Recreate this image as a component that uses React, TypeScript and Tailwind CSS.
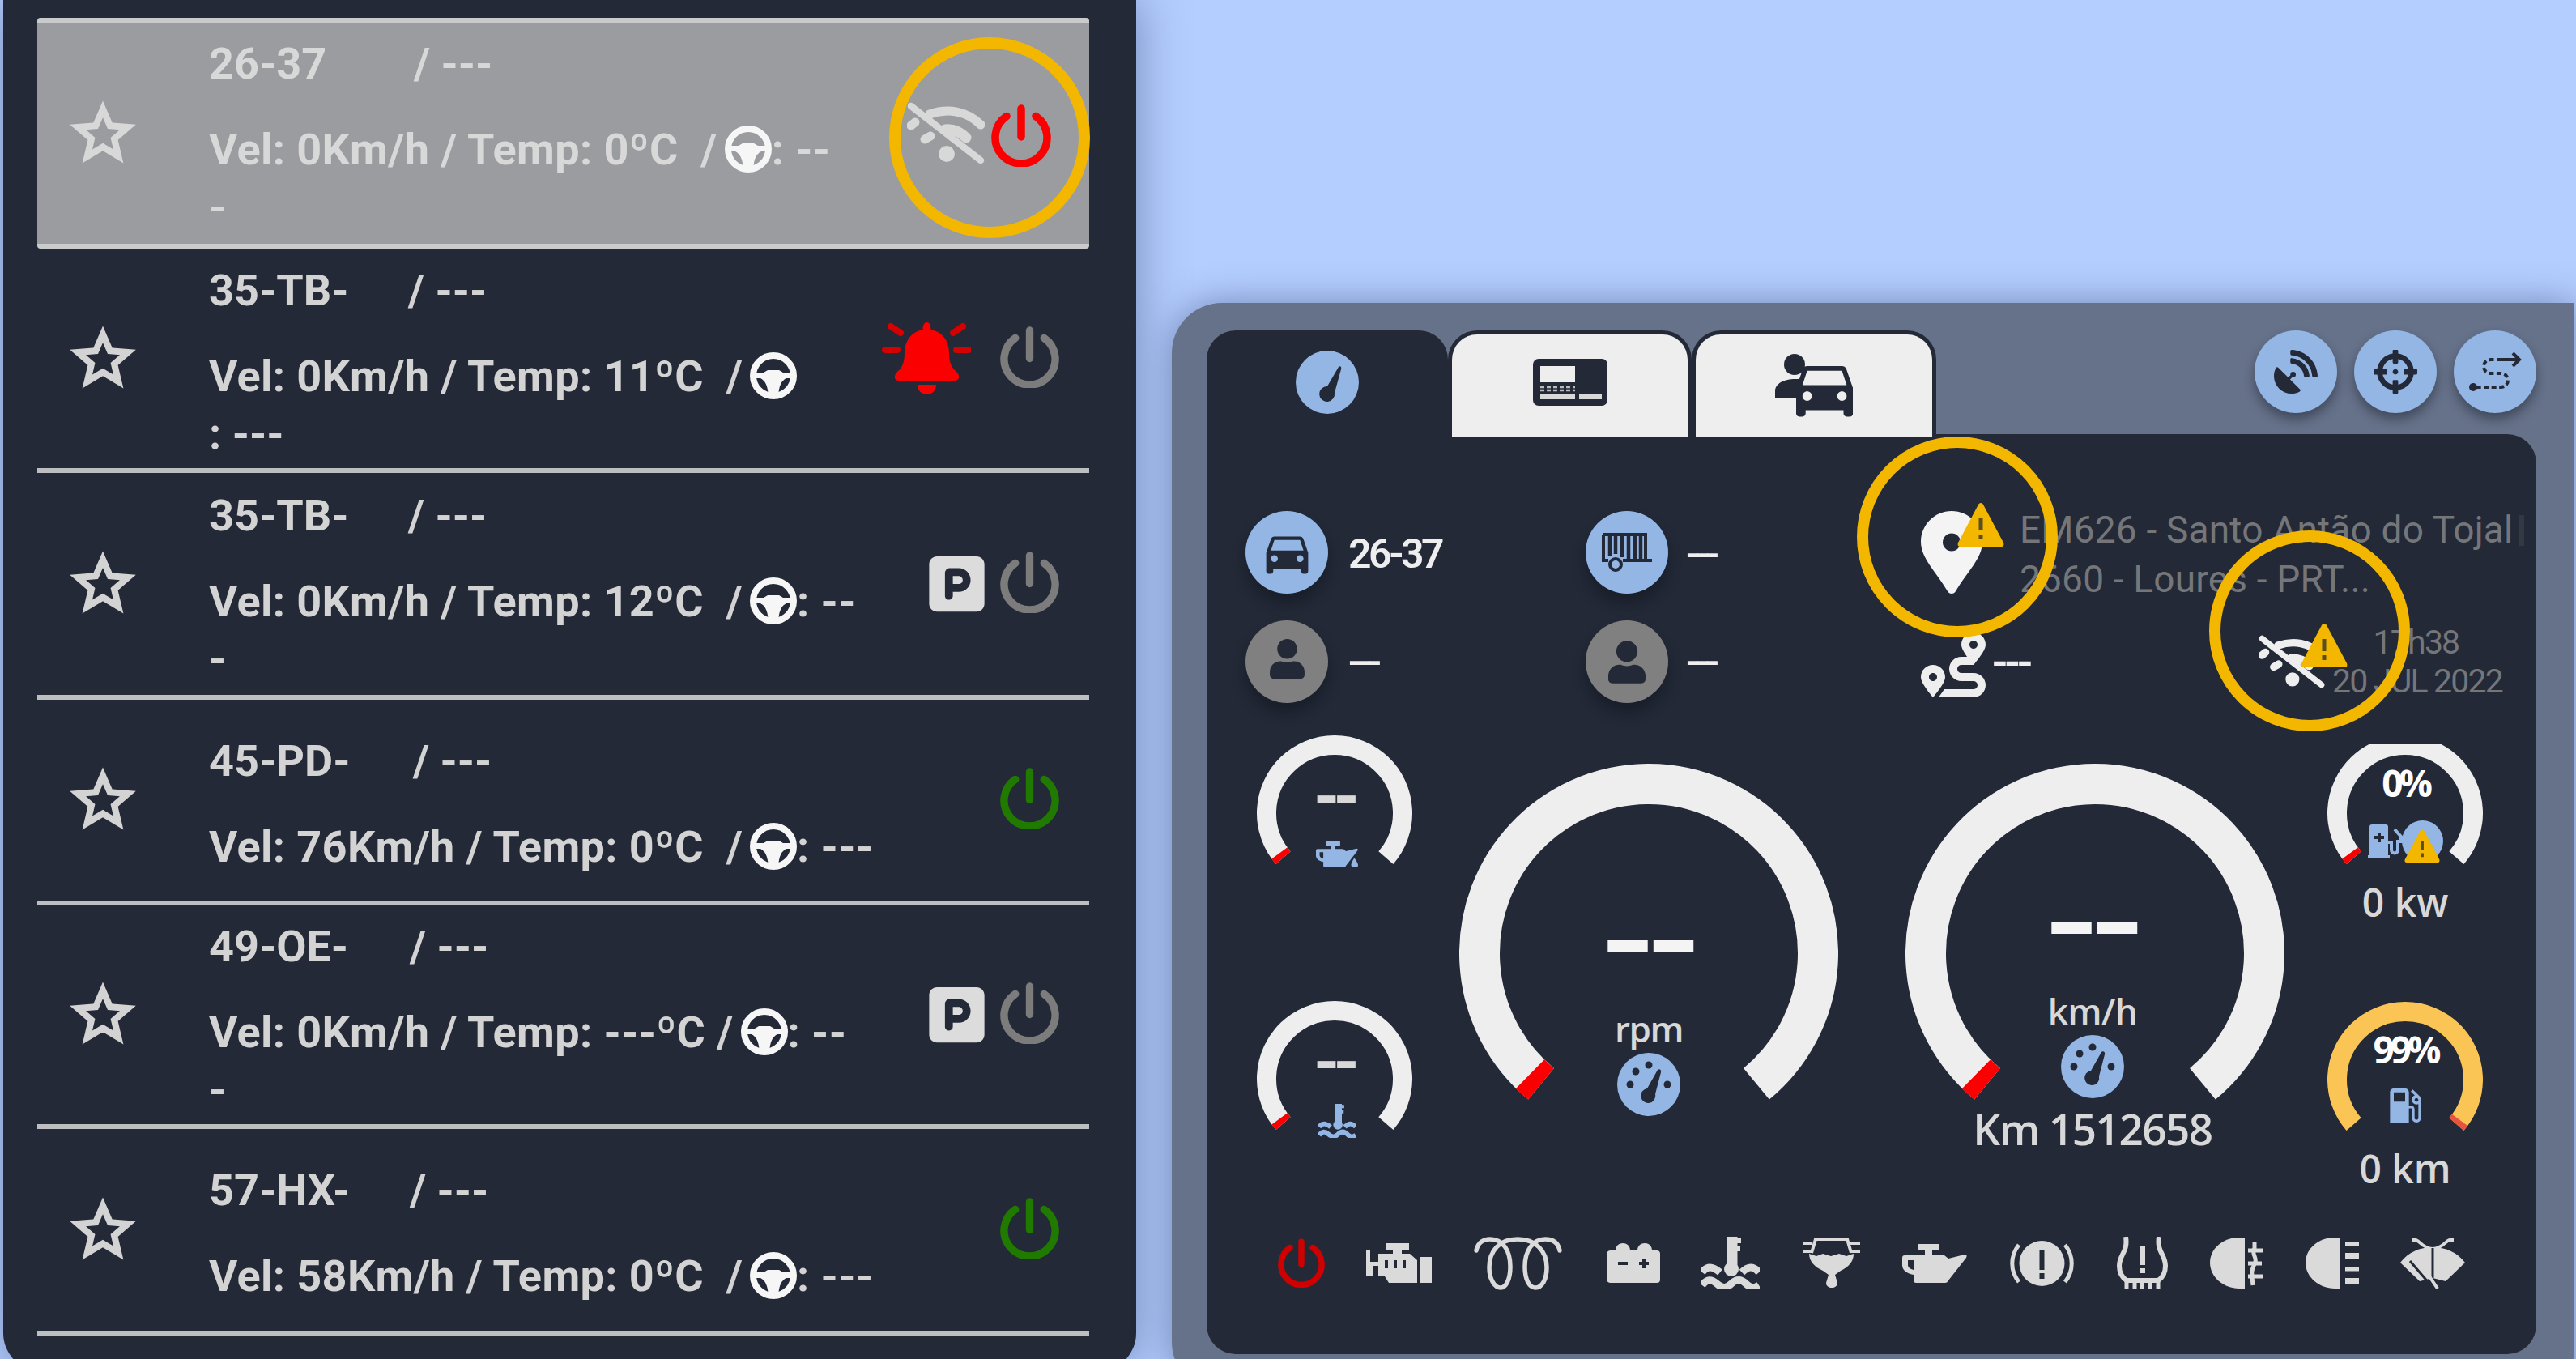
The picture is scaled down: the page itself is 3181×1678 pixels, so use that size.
import type { ReactNode } from "react";
import { FaCrosshairs, FaRoute, FaSatelliteDish, FaUser } from "react-icons/fa";
import { FaSquareParking } from "react-icons/fa6";
import { MdDirectionsCar, MdLocalGasStation } from "react-icons/md";

type Status = "offline" | "alarm" | "parked" | "on";

type Vehicle = {
  plate: string;
  plateWidth: string;
  info: string;
  driver: string;
  rest?: string;
  status: Status;
  height: string;
};

const vehicles: Vehicle[] = [
  { plate: "26-37", plateWidth: "w-[253px]", info: "Vel: 0Km/h / Temp: 0ºC  /", driver: ": --", rest: "-", status: "offline", height: "h-[285px]" },
  { plate: "35-TB-", plateWidth: "w-[246px]", info: "Vel: 0Km/h / Temp: 11ºC  /", driver: "", rest: ": ---", status: "alarm", height: "h-[277px]" },
  { plate: "35-TB-", plateWidth: "w-[246px]", info: "Vel: 0Km/h / Temp: 12ºC  /", driver: ": --", rest: "-", status: "parked", height: "h-[280px]" },
  { plate: "45-PD-", plateWidth: "w-[252px]", info: "Vel: 76Km/h / Temp: 0ºC  /", driver: ": ---", status: "on", height: "h-[254px]" },
  { plate: "49-OE-", plateWidth: "w-[248px]", info: "Vel: 0Km/h / Temp: ---ºC /", driver: ": --", rest: "-", status: "parked", height: "h-[276px]" },
  { plate: "57-HX-", plateWidth: "w-[248px]", info: "Vel: 58Km/h / Temp: 0ºC  /", driver: ": ---", status: "on", height: "h-[255px]" },
];

function StarIcon() {
  return (
    <svg viewBox="0 0 24 24" className="ml-8 size-[98px] shrink-0" fill="none" stroke="currentColor" strokeWidth="2">
      <path d="M12 4.600l2.150 5 5.400.45-4.100 3.550 1.250 5.250L12 16.050l-4.700 2.800 1.250-5.250-4.100-3.550 5.400-.45z" />
    </svg>
  );
}

function PowerIcon({ className }: { className: string }) {
  return (
    <svg viewBox="0 0 74 77" className={className} fill="none" stroke="currentColor" strokeWidth="9.5" strokeLinecap="round">
      <path d="M19 14.5A32 32 0 1 0 55 14.5M37 5v35" />
    </svg>
  );
}

function SteeringWheel() {
  return (
    <svg viewBox="0 0 58 58" className="ml-[9px] inline-block size-[58px] align-[-10px] text-[#f6f6f6]">
      <circle cx="29" cy="29" r="25" fill="none" stroke="currentColor" strokeWidth="8" />
      <path d="M5 25h12l5-3h14l5 3h12v7h-8c-6 3-9 9-10 22h-12c-1-13-4-19-10-22H5z" fill="currentColor" />
    </svg>
  );
}

function WifiOff({ className }: { className: string }) {
  return (
    <svg viewBox="0 0 96 78" className={className} fill="none" stroke="currentColor" strokeLinecap="round">
      <path d="M5 5l86 67" strokeWidth="8.5" />
      <path d="M28 15c22-8 46-4 63 13" strokeWidth="11" />
      <path d="M47 34c10-1 19 3 26 10" strokeWidth="13" />
      <path d="M5 29l5-4M22 46l7-4" strokeWidth="11" />
      <circle cx="49" cy="64" r="10" fill="currentColor" stroke="none" />
    </svg>
  );
}

function AlarmBell() {
  return (
    <svg viewBox="0 0 110 89" className="h-[89px] w-[110px] text-[#fa0000]">
      <path
        d="M55.500 0c3 0 5 3 5 9C75 12 82 22 83 36c0 14 3 20 9 25 5 5 4 11-2 11H21c-6 0-7-6-2-11 6-5 9-11 9-25C29 22 36 12 50.500 9c0-6 2-9 5-9z"
        fill="currentColor"
      />
      <path d="M44 77h23c0 16-23 16-23 0z" fill="currentColor" />
      <path d="M11 5l12 8M100 5l-12 8M4 34h15M107 34H92" stroke="#d50000" strokeWidth="8" strokeLinecap="round" />
    </svg>
  );
}

function StatusIcons({ status }: { status: Status }) {
  if (status === "offline") {
    return (
      <div className="flex items-center gap-2 pr-[47px]">
        <WifiOff className="h-[78px] w-[96px] text-[#d8d8d8]" />
        <PowerIcon className="mt-1.5 h-[77px] w-[74px] text-[#fa0000]" />
      </div>
    );
  }
  if (status === "alarm") {
    return (
      <div className="flex items-center gap-9 pr-[37px]">
        <AlarmBell />
        <PowerIcon className="-mt-1 h-[76px] w-[73px] text-[#7c7c7c]" />
      </div>
    );
  }
  if (status === "parked") {
    return (
      <div className="flex items-center gap-[19px] pr-[37px]">
        <FaSquareParking className="h-[78px] w-[69px] text-[#dcdcdc]" />
        <PowerIcon className="-mt-1 h-[76px] w-[73px] text-[#7c7c7c]" />
      </div>
    );
  }
  return (
    <div className="flex items-center pr-[37px]">
      <PowerIcon className="-mt-1 h-[76px] w-[73px] text-[#217a00]" />
    </div>
  );
}

function VehicleRow({ vehicle }: { vehicle: Vehicle }) {
  const selected = vehicle.status === "offline";
  return (
    <li
      className={`flex items-center border-b-[6px] ${vehicle.height} ${
        selected ? "rounded-[4px] border-t-[6px] border-[#c9cacc] bg-[#9b9ca0] text-[#d8d8d8]" : "border-[#bcbec1] text-[#d3d3d3]"
      }`}
    >
      <StarIcon />
      <div className={`ml-[82px] flex-1 text-[54px] leading-[71px] font-bold whitespace-pre ${selected ? "pt-1" : "pt-2"}`}>
        <p className="mb-[35px] flex">
          <span className={vehicle.plateWidth}>{vehicle.plate}</span>
          <span>/ ---</span>
        </p>
        <p className="h-[71px] tracking-[0.4px]">
          {vehicle.info}
          <SteeringWheel />
          {vehicle.driver}
        </p>
        {vehicle.rest && <p>{vehicle.rest}</p>}
      </div>
      <StatusIcons status={vehicle.status} />
    </li>
  );
}

function GaugeIcon({ dots = true }: { dots?: boolean }) {
  return (
    <svg viewBox="0 0 78 78" className="size-[78px] shrink-0">
      <circle cx="39" cy="39" r="39" fill="#93b6e5" />
      <g fill="#232937">
        {dots ? (
          <>
            <circle cx="16" cy="39" r="4.500" />
            <circle cx="23" cy="23" r="4.500" />
            <circle cx="39" cy="15" r="4.500" />
            <circle cx="62" cy="39" r="4.500" />
            <path d="M50 21c2-2 5 0 4 3l-7 27a9 9 0 1 1-10-7z" />
          </>
        ) : (
          <path d="M53 20c2-2 4 0 3 3l-8 29a9.500 9.500 0 1 1-9-8z" />
        )}
      </g>
    </svg>
  );
}

function CardIcon() {
  return (
    <svg viewBox="0 0 92 58" className="h-[58px] w-[92px]">
      <rect width="92" height="58" rx="7" fill="#232937" />
      <rect x="9" y="9" width="43" height="20" fill="#eee" />
      <path d="M9 35h43M9 39h43" stroke="#bbb" strokeWidth="2.500" strokeDasharray="5 3" />
      <path d="M9 47h43M57 47h28" stroke="#d8d8d8" strokeWidth="6" />
    </svg>
  );
}

function DriverCarIcon() {
  return (
    <svg viewBox="0 0 96 78" className="h-[78px] w-[96px] text-[#232937]" fill="currentColor">
      <circle cx="24" cy="13" r="13" />
      <path d="M0 55V46C0 35 14 30 28 31h7l-8 24z" />
      <path
        transform="translate(14.300 -4.500) scale(3.900)"
        d="M18.920 6.010C18.720 5.420 18.160 5 17.500 5h-11c-.66 0-1.210.42-1.420 1.010L3 12v8c0 .55.45 1 1 1h1c.55 0 1-.45 1-1v-1h12v1c0 .55.45 1 1 1h1c.55 0 1-.45 1-1v-8l-2.080-5.990zM6.500 16c-.83 0-1.500-.67-1.500-1.500S5.670 13 6.500 13s1.500.67 1.500 1.500S7.330 16 6.500 16zm11 0c-.83 0-1.500-.67-1.500-1.500s.67-1.500 1.500-1.500 1.500.67 1.500 1.500-.67 1.500-1.500 1.500zM5 11l1.500-4.500h11L19 11H5z"
      />
    </svg>
  );
}

function TripIcon() {
  return (
    <svg viewBox="0 0 65 52" className="h-[52px] w-[65px]" fill="none" stroke="currentColor" strokeWidth="4">
      <path d="M40 11H27c-12 0-12 17 0 17h12c12 0 12 17 0 17H6" strokeDasharray="6 3.500" />
      <path d="M38 11h22M54 3l8 8-8 8" />
      <circle cx="5" cy="45" r="5" fill="currentColor" stroke="none" />
    </svg>
  );
}

function TrailerIcon() {
  return (
    <svg viewBox="0 0 65 50" className="h-[50px] w-[65px]" fill="none" stroke="currentColor" strokeWidth="4">
      <path d="M2 3h53v32h8M55 35H27M9 35H3V3" />
      <path d="M11 3v26M18 3v24M26 3v28M34 3v32M42 3v32M49 3v32" strokeWidth="4.500" />
      <circle cx="18" cy="40" r="7" />
    </svg>
  );
}

function PinIcon() {
  return (
    <svg viewBox="0 0 76 102" className="h-[102px] w-[76px]" fill="#f4f4f4" fillRule="evenodd">
      <path d="M38 0C59 0 76 17 76 38c0 20-18 36-33 61-2 4-8 4-10 0C18 74 0 58 0 38 0 17 17 0 38 0zm0 27.500a11 11 0 1 0 0 22 11 11 0 0 0 0-22z" />
    </svg>
  );
}

function Warning({ className }: { className: string }) {
  return (
    <svg viewBox="0 0 58 54" className={className}>
      <path d="M29 0c1.500 0 2.500 1 3 2l25 47c1 3 0 5-3 5H4c-3 0-4-2-3-5L26 2c.5-1 1.500-2 3-2z" fill="#f3b700" />
      <path d="M29 19v15M29 39v6" stroke="#5a4d20" strokeWidth="5" />
    </svg>
  );
}

function ChargerIcon() {
  return (
    <svg viewBox="0 0 46 42" className="h-[42px] w-[46px]" fill="currentColor">
      <path d="M5 0h17c2 0 3 1 3 3v35h2v4H0v-4h2V3c0-2 1-3 3-3z" />
      <path d="M14 10v12M8 16h12" stroke="#232937" strokeWidth="4" />
      <path d="M25 22h4v9c0 6 8 6 8 0V19M33 6l8 9v8" fill="none" stroke="currentColor" strokeWidth="4" />
    </svg>
  );
}

function OilIcon({ className, drip = false }: { className: string; drip?: boolean }) {
  return (
    <svg viewBox="0 0 80 48" className={className} preserveAspectRatio="none" fill="currentColor">
      <path
        d="M19 0h27v8h-9v6h15l5 4 20-5c3 0 3 2 2 4L57 45c-1 2-2 3-4 3H17c-2 0-3-2-3-3v-7C5 36 0 32 0 26V17c0-2 1-3 3-3h25V8h-9zM7 20v6c0 3 3 5 7 6V20z"
        fillRule="evenodd"
      />
      {drip && <path d="M73 30c4 7 7 10 7 14 0 6-13 6-13 0 0-4 2-7 6-14z" />}
    </svg>
  );
}

function CoolantIcon({ className }: { className: string }) {
  return (
    <svg viewBox="0 0 72 65" className={className} fill="none" stroke="currentColor" strokeWidth="9">
      <path d="M38 0v40" strokeWidth="13" />
      <path d="M42 5h7M42 15h6" strokeWidth="6" />
      <circle cx="37" cy="40" r="9" fill="currentColor" stroke="none" />
      <path d="M1 44c6-8 12-8 22 0M50 44c8-8 14-8 21 0" />
      <path d="M1 60c6-8 11-8 18-2s12 6 18 0 12-6 18 0 10 6 16 2" />
    </svg>
  );
}

const statusIcons: { name: string; icon: ReactNode }[] = [
  { name: "ignition", icon: <PowerIcon className="h-[61px] w-[58px] text-[#cf0000]" /> },
  {
    name: "engine",
    icon: (
      <svg viewBox="0 0 81 50" className="h-[50px] w-[81px]" fill="currentColor">
        <path d="M24 0h29v8h-9v5h10l9 8v28H28l-5-8h-8V28h-7v13H0V8h5v15h10V13h18V8h-9zM67 17h14v32H67z" />
        <path d="M25 21v10M36 21v10M47 21v10" stroke="#232937" strokeWidth="4" />
      </svg>
    ),
  },
  {
    name: "preheat",
    icon: (
      <svg viewBox="0 0 109 66" className="h-[66px] w-[109px]" fill="none" stroke="currentColor" strokeWidth="5.500" strokeLinecap="round">
        <path d="M3 17C5 7 12 3 20 3c16 0 25 14 25 34 0 15-5 26-12 26S19 53 19 38C19 17 32 3 54 3s36 14 36 35c0 15-6 25-14 25S63 52 63 37C63 17 73 3 88 3c9 0 16 4 18 14" />
      </svg>
    ),
  },
  {
    name: "battery",
    icon: (
      <svg viewBox="0 0 66 50" className="ml-1 h-[50px] w-[66px]" fill="currentColor">
        <path d="M5 9h6c0-12 18-12 18 0h9c0-12 18-12 18 0h6c3 0 4 2 4 4v32c0 3-2 4-4 4H5c-3 0-5-2-5-4V13c0-2 2-4 5-4z" />
        <path d="M14 25h12M40 25h12M46 19v12" stroke="#232937" strokeWidth="4" />
      </svg>
    ),
  },
  { name: "coolant", icon: <CoolantIcon className="h-[65px] w-[72px]" /> },
  {
    name: "fuel-filter",
    icon: (
      <svg viewBox="0 0 73 65" className="h-[65px] w-[73px]" fill="none" stroke="currentColor" strokeWidth="4">
        <path d="M12 20L17 3h39l5 17M1 8h12M1 18h12M60 8h12M60 18h12" />
        <path d="M9 21l9 3 8-3 10 3 10-3 9 3 9-3c0 10-7 17-16 21l-7 5 3 10c0 8-14 8-14 0l3-10-7-5C17 38 9 31 9 21z" fill="currentColor" stroke="none" />
      </svg>
    ),
  },
  { name: "oil", icon: <OilIcon className="h-[48px] w-[80px]" /> },
  {
    name: "brake",
    icon: (
      <svg viewBox="0 0 81 58" className="h-[58px] w-[81px]" fill="none" stroke="currentColor" strokeWidth="5">
        <circle cx="40.500" cy="29" r="28" fill="currentColor" stroke="none" />
        <path d="M12 6C1 20 1 38 12 52M69 6c11 14 11 32 0 46" />
        <path d="M40.500 12v25M40.500 41v7" stroke="#232937" strokeWidth="6" />
      </svg>
    ),
  },
  {
    name: "tyre",
    icon: (
      <svg viewBox="0 0 65 65" className="h-[65px] w-[65px]" fill="none" stroke="currentColor" strokeWidth="6">
        <path d="M12 0c3 19-8 22-8 36 0 8 3 14 9 18h39c6-4 9-10 9-18 0-14-11-17-8-36" />
        <path d="M13 54v10M23 54v10M32 54v10M42 54v10M52 54v10" strokeWidth="5" />
        <path d="M32.500 11v24M32.500 39v6" strokeWidth="7" />
      </svg>
    ),
  },
  {
    name: "fog",
    icon: (
      <svg viewBox="0 0 66 65" className="h-[65px] w-[66px]" fill="none" stroke="currentColor" strokeWidth="5">
        <path d="M43 1v63h-7C17 64 0 50 0 32S17 1 36 1z" fill="currentColor" stroke="none" />
        <path d="M47 17h18M47 33h17M47 49h18" />
        <path d="M55 6v8c-5 8 5 12 0 20s-3 14-2 26" />
      </svg>
    ),
  },
  {
    name: "low-beam",
    icon: (
      <svg viewBox="0 0 66 65" className="h-[65px] w-[66px]" fill="none" stroke="currentColor">
        <path d="M43 1v63h-7C17 64 0 50 0 32S17 1 36 1z" fill="currentColor" stroke="none" />
        <path d="M49 9h17M49 40h17" strokeWidth="5" />
        <path d="M49 24h17M49 55h17" strokeWidth="8" />
      </svg>
    ),
  },
  {
    name: "wipers",
    icon: (
      <svg viewBox="0 0 80 67" className="h-[67px] w-[80px]" fill="none" stroke="currentColor" strokeWidth="4">
        <path d="M0 33C10 20 24 14 40 14s30 6 40 19L56 56l-16-4-16 4z" fill="currentColor" stroke="none" />
        <path d="M14 5h5c4 0 8 10 21 11C53 15 57 5 61 5h5" />
        <path d="M12 31l24 28M40 15v37" stroke="#232937" strokeWidth="3" />
        <path d="M36 50l10 15" />
      </svg>
    ),
  },
];

function arc(center: number, radius: number, from: number, to: number) {
  const point = (deg: number) => {
    const rad = (deg * Math.PI) / 180;
    return `${(center + radius * Math.cos(rad)).toFixed(2)} ${(center + radius * Math.sin(rad)).toFixed(2)}`;
  };
  return `M${point(from)}A${radius} ${radius} 0 ${to - from > 180 ? 1 : 0} 1 ${point(to)}`;
}

type DialProps = {
  size: number;
  thickness: number;
  // degrees below the horizontal where the scale stops
  end: number;
  color?: string;
  markAtEnd?: boolean;
  markColor?: string;
};

function Dial({ size, thickness, end, color = "#eee", markAtEnd = false, markColor = "#fa0000" }: DialProps) {
  const center = size / 2;
  const radius = center - thickness / 2;
  const from = 180 - end;
  const to = 360 + end;
  return (
    <svg width={size} height={size} viewBox={`0 0 ${size} ${size}`} fill="none" strokeWidth={thickness}>
      <path d={arc(center, radius, from, to)} stroke={color} />
      <path d={markAtEnd ? arc(center, radius, to - 4.5, to) : arc(center, radius, from, from + 5)} stroke={markColor} />
    </svg>
  );
}

function SmallGauge({ children, dial }: { children: ReactNode; dial?: Partial<DialProps> }) {
  return (
    <div className="relative size-[192px]">
      <Dial size={192} thickness={24} end={41} {...dial} />
      <div className="absolute inset-0 flex flex-col items-center">{children}</div>
    </div>
  );
}

function RoundButton({ children }: { children: ReactNode }) {
  return (
    <button className="flex size-[102px] items-center justify-center rounded-full bg-[#93b6e5] text-[#232937] shadow-[0_8px_14px_rgba(20,25,35,0.45)]">
      {children}
    </button>
  );
}

function Badge({ children, muted = false }: { children: ReactNode; muted?: boolean }) {
  return (
    <div
      className={`flex size-[102px] shrink-0 items-center justify-center rounded-full text-[#232937] shadow-[0_12px_16px_rgba(10,14,22,0.4)] ${
        muted ? "bg-[#808080]" : "bg-[#93b6e5]"
      }`}
    >
      {children}
    </div>
  );
}

function Tabs() {
  return (
    <nav className="-mb-1 flex h-[132px]">
      <div className="flex w-[298px] justify-center rounded-t-[36px] bg-[#232937] pt-[25px]">
        <GaugeIcon dots={false} />
      </div>
      <div className="flex w-[301px] justify-center rounded-t-[36px] border-x-[5px] border-t-[5px] border-[#232937] bg-[#eee] pt-[30px]">
        <CardIcon />
      </div>
      <div className="flex w-[302px] justify-center rounded-t-[36px] border-x-[5px] border-t-[5px] border-[#232937] bg-[#eee] pt-6">
        <DriverCarIcon />
      </div>
    </nav>
  );
}

function InfoGrid() {
  return (
    <div className="grid grid-cols-[420px_414px_1fr] grid-rows-[102px_102px] gap-y-[33px] pt-[95px] pl-[48px] text-[50px] font-medium tracking-[-2px] text-[#eee]">
      <div className="flex items-center gap-[25px]">
        <Badge>
          <MdDirectionsCar className="size-[69px]" />
        </Badge>
        <span className="pt-1 font-semibold tracking-[-3.5px]">26-37</span>
      </div>
      <div className="flex items-center gap-[22px]">
        <Badge>
          <TrailerIcon />
        </Badge>
        <span className="pt-1 tracking-[-5px]">---</span>
      </div>
      <div className="flex items-center gap-[46px]">
        <div className="relative">
          <PinIcon />
          <Warning className="absolute -top-2.5 left-[45px] h-[54px] w-[58px]" />
        </div>
        <div className="pt-1.5 text-[46px] leading-[61px] font-normal tracking-[0.2px] whitespace-nowrap text-[#747679]">
          <p className="flex items-center gap-2">
            EM626 - Santo Antão do Tojal
            <span className="h-[38px] w-1.5 bg-[#343842]" />
          </p>
          <p>2660 - Loures - PRT...</p>
        </div>
      </div>

      <div className="flex items-center gap-[25px]">
        <Badge muted>
          <FaUser className="mb-2 h-[49px] w-[43px]" />
        </Badge>
        <span className="tracking-[-5px]">---</span>
      </div>
      <div className="flex items-center gap-[22px]">
        <Badge muted>
          <FaUser className="h-[53px] w-[46px]" />
        </Badge>
        <span className="tracking-[-5px]">---</span>
      </div>
      <div className="flex items-center">
        <FaRoute className="mt-2 size-[80px] shrink-0" />
        <span className="ml-2 w-[54px] text-[56px] tracking-[-3.5px]">---</span>
        <div className="relative ml-[275px]">
          <WifiOff className="h-[67px] w-[82px]" />
          <Warning className="absolute -top-3.5 left-[52px] h-[54px] w-[58px]" />
        </div>
        <p className="ml-[9px] w-[207px] text-center text-[41px] leading-[48px] font-normal tracking-[-1.8px] whitespace-nowrap text-[#747679]">
          17h38
          <br />
          20 JUL 2022
        </p>
      </div>
    </div>
  );
}

function Gauges() {
  return (
    <div className="flex h-[658px] pt-10 pl-[62px] font-['Open_Sans',sans-serif] font-semibold text-[#d8d8d8]">
      <div className="flex flex-col gap-[136px]">
        <SmallGauge>
          <span className="mt-[45px] text-[90px] leading-[46px] tracking-[-4.5px]">--</span>
          <OilIcon className="mt-10 ml-1.5 h-[32px] w-[52px] text-[#93b6e5]" drip />
        </SmallGauge>
        <SmallGauge>
          <span className="mt-[45px] text-[90px] leading-[46px] tracking-[-4.5px]">--</span>
          <CoolantIcon className="mt-9 ml-1.5 h-[42px] w-[47px] text-[#93b6e5]" />
        </SmallGauge>
      </div>

      <div className="relative mt-[35px] ml-[58px] size-[468px]">
        <Dial size={468} thickness={50} end={50.5} />
        <div className="absolute inset-0 flex flex-col items-center pt-[162px]">
          <span className="scale-x-[1.65] text-[114px] leading-[100px] font-bold tracking-[-2.5px] text-[#f4f4f4]">--</span>
          <span className="mt-[35px] text-[44px] leading-[60px] tracking-[-1.5px]">rpm</span>
          <GaugeIcon />
        </div>
      </div>

      <div className="relative mt-[35px] ml-[83px] size-[468px]">
        <Dial size={468} thickness={50} end={50.5} />
        <div className="absolute inset-0 right-1.5 flex flex-col items-center pt-[140px]">
          <span className="scale-x-[1.65] text-[114px] leading-[100px] font-bold tracking-[-2.5px] text-[#f4f4f4]">--</span>
          <span className="mt-[35px] text-[44px] leading-[60px] tracking-[-0.5px]">km/h</span>
          <GaugeIcon />
          <span className="mt-2 text-[53px] leading-[60px] tracking-[-1.5px]">Km 1512658</span>
        </div>
      </div>

      <div className="ml-[53px] flex w-[192px] flex-col items-center">
        <div className="[clip-path:inset(11px_0_0_0)]">
          <SmallGauge>
            <span className="mt-[33px] text-[46px] leading-[50px] font-bold tracking-[-5px] text-white">0%</span>
            <div className="mt-[22px] flex items-center text-[#93b6e5]">
              <ChargerIcon />
              <div className="-ml-1 flex size-[51px] shrink-0 items-center justify-center rounded-full bg-[#93b6e5]">
                <Warning className="mt-3 h-[41px] w-[46px]" />
              </div>
            </div>
          </SmallGauge>
        </div>
        <span className="-mt-4 text-[48px] leading-[60px]">0 kw</span>
        <div className="mt-[93px]">
          <SmallGauge dial={{ color: "#fbc555", markAtEnd: true, markColor: "#e8533f" }}>
            <span className="mt-[33px] text-[46px] leading-[50px] font-bold tracking-[-5px] text-white">99%</span>
            <MdLocalGasStation className="mt-[17px] size-[56px] text-[#93b6e5]" />
          </SmallGauge>
        </div>
        <span className="-mt-4 text-[48px] leading-[60px]">0 km</span>
      </div>
    </div>
  );
}

function Dashboard() {
  return (
    <section className="mt-[374px] mr-[3px] ml-[44px] h-[1345px] flex-1 rounded-l-[62px] bg-[#66728a] pt-[34px] pr-[46px] pl-[43px] shadow-[0_0_44px_rgba(50,65,110,0.5)]">
      <div className="flex h-[128px] items-start justify-between">
        <Tabs />
        <div className="flex gap-[21px]">
          <RoundButton>
            <FaSatelliteDish className="size-[54px]" />
          </RoundButton>
          <RoundButton>
            <FaCrosshairs className="size-[54px]" />
          </RoundButton>
          <RoundButton>
            <TripIcon />
          </RoundButton>
        </div>
      </div>
      <div className="h-[1136px] rounded-tr-[36px] rounded-b-[36px] bg-[#232937]">
        <InfoGrid />
        <Gauges />
        <div className="flex h-[67px] items-center justify-between pr-[88px] pl-[88px] text-[#dadada]">
          {statusIcons.map((item) => (
            <div key={item.name}>{item.icon}</div>
          ))}
        </div>
      </div>
    </section>
  );
}

export default function App() {
  return (
    <div className="relative flex h-[1678px] w-[3181px] overflow-hidden bg-[#b4ceff] font-[Roboto,sans-serif]">
      <aside className="ml-1 h-[1694px] w-[1399px] shrink-0 rounded-b-[48px] bg-[#232937] pt-[22px] pr-[58px] pl-[42px] shadow-[0_0_60px_rgba(50,65,110,0.5)]">
        <ul>
          {vehicles.map((vehicle, i) => (
            <VehicleRow key={i} vehicle={vehicle} />
          ))}
        </ul>
      </aside>
      <Dashboard />

      {/* highlight rings */}
      <div className="absolute top-[46px] left-[1098px] size-[248px] rounded-full border-[14px] border-[#f3b700]" />
      <div className="absolute top-[539px] left-[2293px] size-[248px] rounded-full border-[14px] border-[#f3b700]" />
      <div className="absolute top-[655px] left-[2728px] size-[248px] rounded-full border-[14px] border-[#f3b700]" />
    </div>
  );
}
